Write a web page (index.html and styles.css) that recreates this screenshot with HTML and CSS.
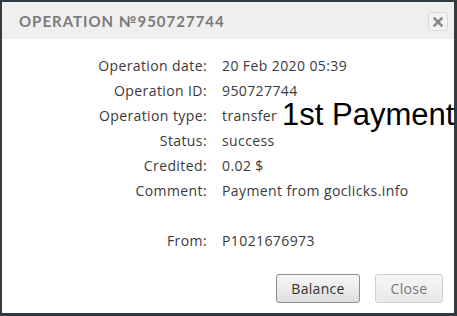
FILE: index.html
```html
<!DOCTYPE html>
<html lang="en">

<head>
    <meta charset="UTF-8" />
    <meta name="viewport" content="width=device-width, initial-scale=1.0" />
    <title>Operation</title>
    <link rel="stylesheet" href="styles.css">
</head>

<body>

    <div class="dialog">
        <div class="dialog-header">
            <h2>Operation №950727744</h2>
            <span class="close-btn">
                <svg width="10" height="10" viewBox="0 0 10 10">
                    <path d="M1.5 1.5 L8.5 8.5 M8.5 1.5 L1.5 8.5" stroke="#8a8a8a" stroke-width="2.6" stroke-linecap="square" />
                </svg>
            </span>
        </div>

        <div class="details">
            <span class="label">Operation date:</span>
            <span class="value">20 Feb 2020 05:39</span>
            <span class="label">Operation ID:</span>
            <span class="value">950727744</span>
            <span class="label">Operation type:</span>
            <span class="value">transfer</span>
            <span class="label">Status:</span>
            <span class="value">success</span>
            <span class="label">Credited:</span>
            <span class="value">0.02 $</span>
            <span class="label">Comment:</span>
            <span class="value">Payment from goclicks.info</span>
            <span class="label"></span>
            <span class="value"></span>
            <span class="label">From:</span>
            <span class="value">P1021676973</span>
        </div>

        <div class="dialog-footer">
            <button class="btn btn-main">Balance</button>
            <button class="btn btn-light">Close</button>
        </div>
    </div>

    <div class="note">1st Payment</div>

</body>

</html>
```

FILE: styles.css
```css
body {
    margin: 0;
    background-color: #2f3b41;
    height: 316px;
    overflow: hidden;
    position: relative;
}

.dialog {
    margin: 2px 3px 0 2px;
    height: 311px;
    background: #fff;
    display: flex;
    flex-direction: column;
}

.dialog-header {
    height: 37px;
    background: #efefef;
    display: flex;
    align-items: center;
    justify-content: space-between;
    padding: 0 6px 0 17px;
}

.dialog-header h2 {
    margin: 0;
    font-family: 'Lato', sans-serif;
    font-weight: 700;
    font-size: 15px;
    letter-spacing: 1px;
    text-transform: uppercase;
    color: #7b7b7b;
}

.close-btn {
    width: 18px;
    height: 17px;
    border: 1px solid #d9d9d9;
    border-radius: 3px;
    background: #f3f3f3;
    display: flex;
    align-items: center;
    justify-content: center;
    margin-top: 2px;
}

.details {
    display: grid;
    grid-template-columns: 205px 1fr;
    column-gap: 15px;
    padding-top: 14px;
    font-family: 'Open Sans', sans-serif;
    font-size: 14px;
    letter-spacing: 0.4px;
    line-height: 25px;
    color: #3a3a3a;
}

.details .label {
    text-align: right;
    height: 25px;
}

.dialog-footer {
    margin-top: auto;
    display: flex;
    justify-content: flex-end;
    gap: 15px;
    padding: 0 11px 10px 0;
}

.btn {
    height: 29px;
    font-family: 'Open Sans', sans-serif;
    font-size: 14px;
    letter-spacing: 0.3px;
    border-radius: 3px;
    padding: 0;
}

.btn-main {
    width: 84px;
    border: 1px solid #8e8e8e;
    background: linear-gradient(#f7f7f7, #dedede);
    color: #333;
}

.btn-light {
    width: 68px;
    border: 1px solid #cfcfcf;
    background: linear-gradient(#f6f6f6, #e9e9e9);
    color: #777;
}

.note {
    position: absolute;
    left: 282px;
    top: 97px;
    font-family: 'Liberation Sans', sans-serif;
    font-size: 31px;
    line-height: 36px;
    color: #000;
    white-space: nowrap;
}
```
